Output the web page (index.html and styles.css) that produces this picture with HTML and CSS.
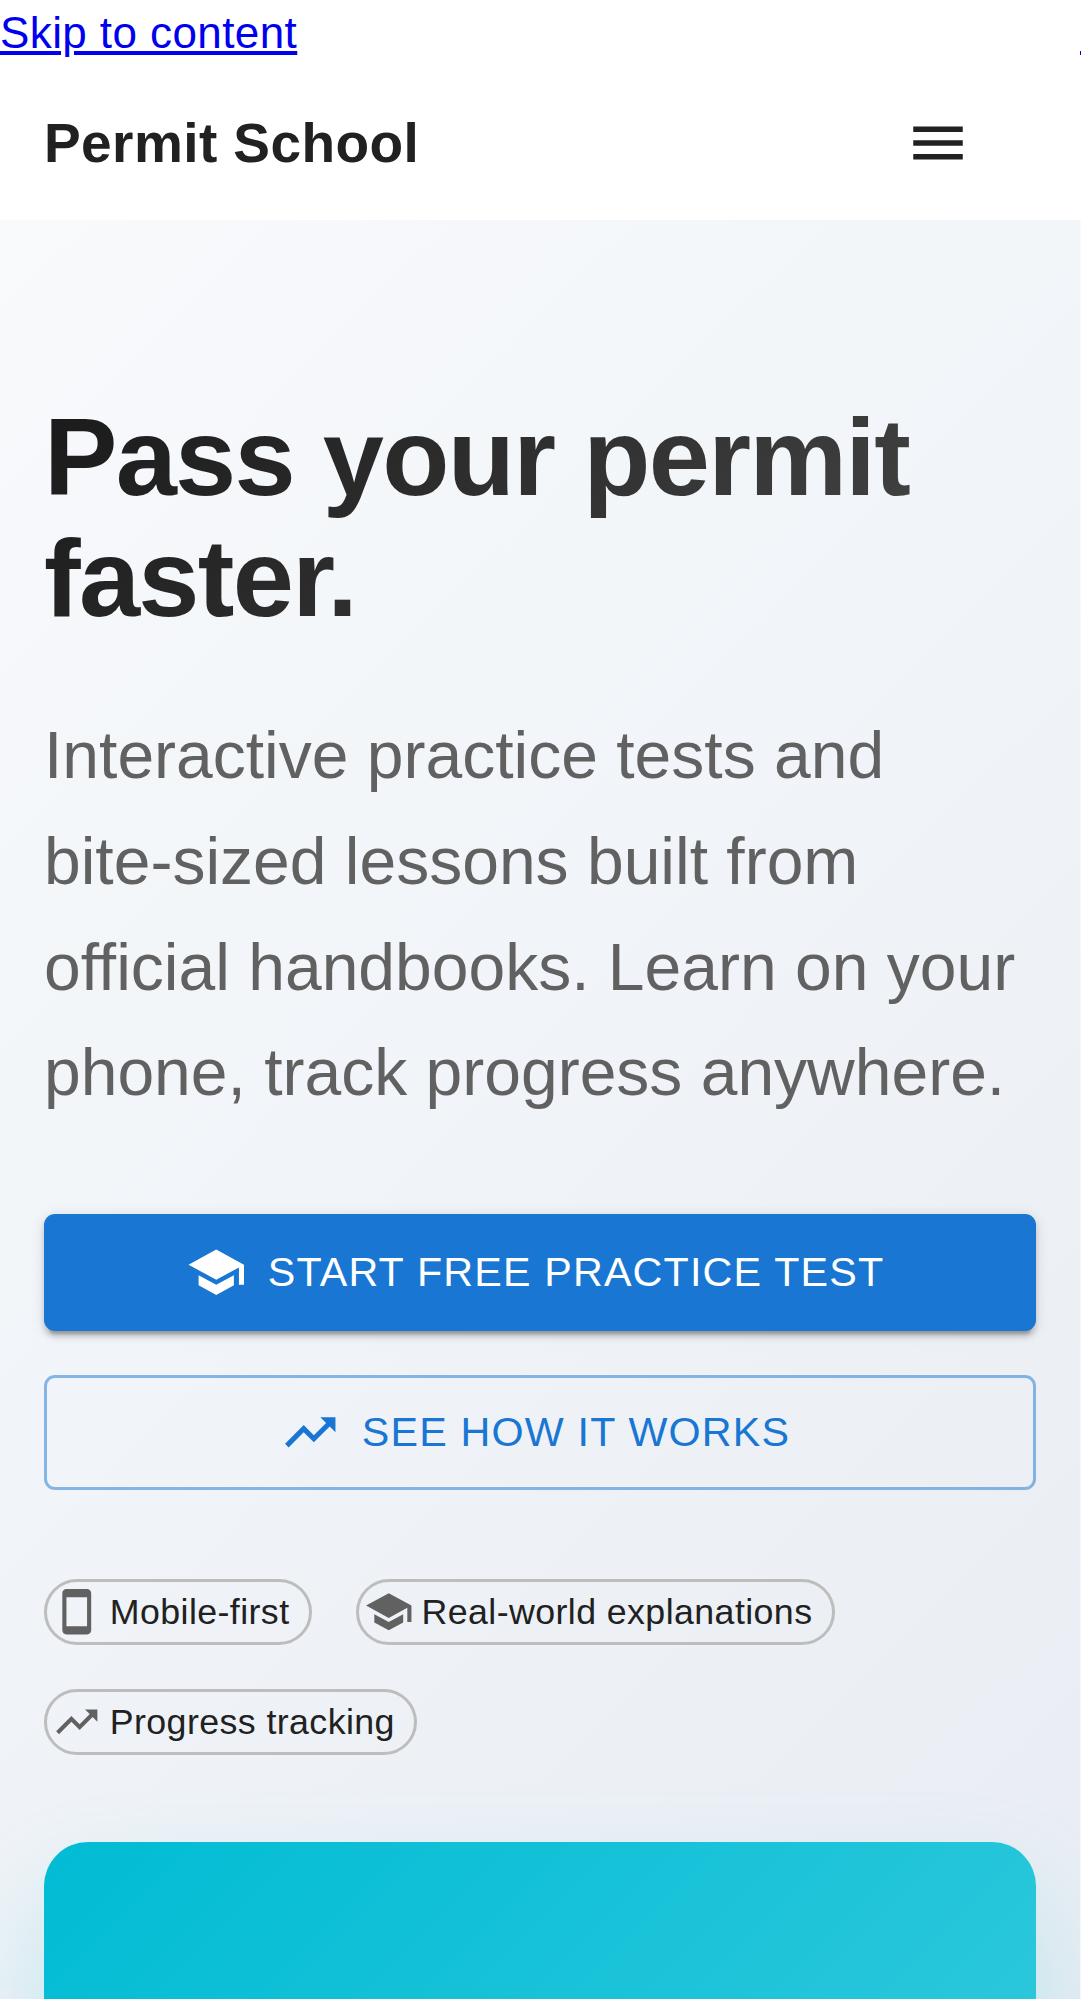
FILE: index.html
```html
<!DOCTYPE html>
<html lang="en">
<head>
<meta charset="utf-8">
<title>Permit School</title>
<link rel="stylesheet" href="styles.css">
</head>
<body>
<svg class="sprite" aria-hidden="true">
  <symbol id="menu" viewBox="0 0 24 24"><path d="M3 18h18v-2H3zm0-5h18v-2H3zm0-7v2h18V6z"/></symbol>
  <symbol id="school" viewBox="0 0 24 24"><path d="M5 13.18v4L12 21l7-3.82v-4L12 17zM12 3 1 9l11 6 9-4.91V17h2V9z"/></symbol>
  <symbol id="trend" viewBox="0 0 24 24"><path d="m16 6 2.29 2.29-4.88 4.88-4-4L2 16.59 3.41 18l6-6 4 4 6.3-6.29L22 12V6z"/></symbol>
  <symbol id="phone" viewBox="0 0 24 24"><path d="M17 1.01 7 1c-1.1 0-2 .9-2 2v18c0 1.1.9 2 2 2h10c1.1 0 2-.9 2-2V3c0-1.1-.9-1.99-2-1.99M17 19H7V5h10z"/></symbol>
</svg>
<div class="skip">
  <a class="skip-link" href="#main">Skip to content</a>
  <span class="skip-edge"></span>
</div>
<header class="header">
  <div class="brand">Permit School</div>
  <button class="menu-button" aria-label="Menu"><svg><use href="#menu"/></svg></button>
</header>
<main class="hero" id="main">
  <h1 class="hero-title">Pass your permit faster.</h1>
  <p class="hero-text">Interactive practice tests and<br>bite-sized lessons built from official handbooks. Learn on your phone, track progress anywhere.</p>
  <div class="actions">
    <a class="button button-primary"><svg><use href="#school"/></svg>START FREE PRACTICE TEST</a>
    <a class="button button-outline"><svg><use href="#trend"/></svg>SEE HOW IT WORKS</a>
  </div>
  <div class="chips">
    <span class="chip"><svg><use href="#phone"/></svg><span class="chip-label">Mobile-first</span></span>
    <span class="chip"><svg><use href="#school"/></svg><span class="chip-label">Real-world explanations</span></span>
    <span class="chip"><svg><use href="#trend"/></svg><span class="chip-label">Progress tracking</span></span>
  </div>
  <div class="preview"></div>
</main>
</body>
</html>
```
FILE: styles.css
```css
* { box-sizing: border-box; }
html { overflow: hidden; }
body {
  margin: 0;
  height: 1999px;
  overflow: hidden;
  background: #fff;
  color: #212121;
  font: 44px/1.5 "Liberation Sans", Arial, sans-serif;
  letter-spacing: 0.41px;
}
svg { fill: currentColor; flex: none; }
.sprite { display: none; }

.skip { display: flex; justify-content: space-between; align-items: flex-start; height: 66px; }
.skip-link { color: #00e; }
.skip-edge { width: 1px; height: 4px; margin-top: 51px; background: #00e; }

.header { display: flex; align-items: center; justify-content: space-between; height: 154px; padding: 0 110px 0 44px; }
.brand { font-size: 55px; font-weight: 700; line-height: 88px; }
.menu-button { display: flex; padding: 0; border: 0; background: none; color: #212121; }
.menu-button svg { width: 66px; height: 66px; }

.hero {
  width: 1081px;
  height: 1779px;
  overflow: hidden;
  padding: 176px 44px 0;
  border-right: 1px solid rgba(255, 255, 255, 0.5);
  background: linear-gradient(135deg, #f8fafc 0%, #e2e8f0 100%) 0 0 / 1081px 2900px border-box;
}
.hero-title {
  margin: 0 0 65.4px;
  font-size: 110px;
  line-height: 121px;
  letter-spacing: -0.01562em;
  background: linear-gradient(135deg, #1a1a1a 0%, #4a4a4a 100%);
  background-clip: text;
  -webkit-background-clip: text;
  color: transparent;
}
.hero-text {
  margin: 0 0 88.6px;
  color: #616161;
  font-size: 66px;
  line-height: 105.6px;
  letter-spacing: 0;
  font-variant-ligatures: none;
}

.actions { display: flex; flex-direction: column; gap: 44px; margin-bottom: 88.5px; }
.button {
  display: flex;
  align-items: center;
  justify-content: center;
  gap: 21.5px;
  padding-right: 10px;
  border-radius: 11px;
  font-size: 41.25px;
  letter-spacing: 0.02857em;
  white-space: nowrap;
}
.button svg { width: 60.5px; height: 60.5px; }
.button-primary {
  height: 116.6px;
  background: #1976d2;
  color: #fff;
  box-shadow: 0 8.25px 2.75px -5.5px rgba(0, 0, 0, 0.2), 0 5.5px 5.5px rgba(0, 0, 0, 0.14), 0 2.75px 13.75px rgba(0, 0, 0, 0.12);
}
.button-outline { height: 115.5px; border: 3px solid rgba(25, 118, 210, 0.5); color: #1976d2; }

.chips { display: flex; flex-wrap: wrap; gap: 44px; margin-bottom: 87.5px; }
.chip {
  display: flex;
  align-items: center;
  gap: 8.25px;
  height: 66px;
  padding: 0 19.25px 0 5px;
  border: 3px solid #bdbdbd;
  border-radius: 33px;
  font-size: 35.75px;
  white-space: nowrap;
}
.chip svg { width: 49.5px; height: 49.5px; color: #616161; }
.chip-label { padding-top: 1px; }

.preview {
  height: 1100px;
  border-radius: 44px;
  background: linear-gradient(135deg, #00bcd4 0%, #4dd0e1 100%);
  box-shadow: 0 55px 110px rgba(0, 188, 212, 0.2);
}
```
